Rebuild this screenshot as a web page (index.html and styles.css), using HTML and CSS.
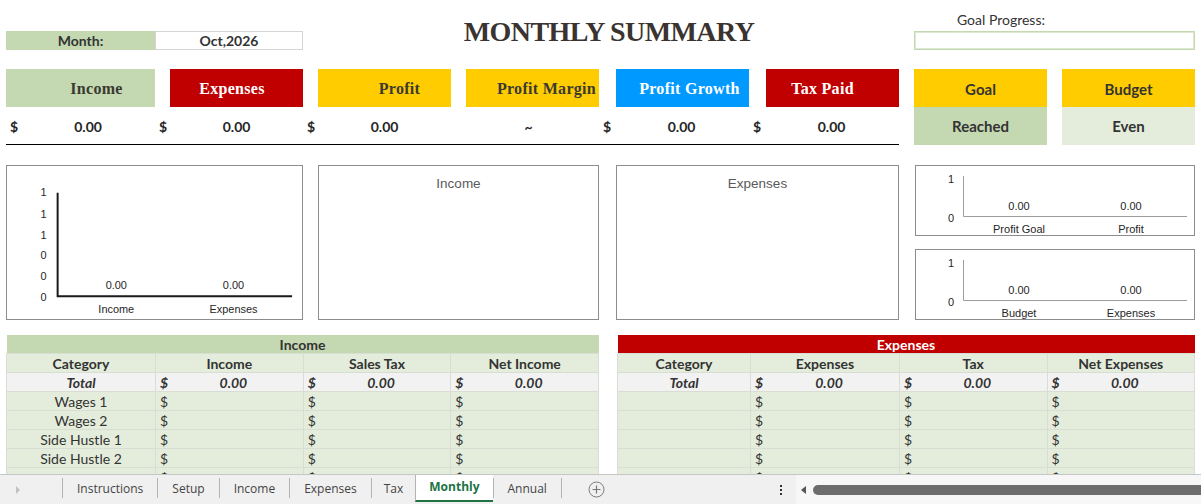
FILE: index.html
```html
<!DOCTYPE html>
<html lang="en">
<head>
    <meta charset="UTF-8">
    <meta name="viewport" content="width=device-width, initial-scale=1.0">
    <title>Monthly Summary</title>
    <link rel="stylesheet" href="styles.css">
</head>
<body>
    <div class="sheet">
        <!-- header: month picker, title, goal progress -->
        <section class="grid top">
            <div class="month-label">Month:</div>
            <div class="month-value">Oct,2026</div>
            <h1 class="title">MONTHLY SUMMARY</h1>
            <div class="goal-label">Goal Progress:</div>
            <div class="goal-bar"></div>
        </section>

        <!-- key figures -->
        <section class="grid kpis">
            <div class="kpi-head k-income">Income</div>
            <div class="kpi-head k-expenses">Expenses</div>
            <div class="kpi-head k-profit">Profit</div>
            <div class="kpi-head k-margin">Profit Margin</div>
            <div class="kpi-head k-growth">Profit Growth</div>
            <div class="kpi-head k-tax">Tax Paid</div>
            <div class="kpi-head k-goal">Goal</div>
            <div class="kpi-head k-budget">Budget</div>

            <div class="kpi-val"><span class="cur">$</span><span class="num">0.00</span></div>
            <div class="kpi-val"><span class="cur">$</span><span class="num">0.00</span></div>
            <div class="kpi-val"><span class="cur">$</span><span class="num">0.00</span></div>
            <div class="kpi-val"><span class="num">~</span></div>
            <div class="kpi-val"><span class="cur">$</span><span class="num">0.00</span></div>
            <div class="kpi-val"><span class="cur">$</span><span class="num">0.00</span></div>
            <div class="status reached">Reached</div>
            <div class="status even">Even</div>
        </section>

        <!-- charts -->
        <section class="grid charts">
            <div class="chart chart-main">
                <svg viewBox="0 0 295 154">
                    <g class="tick">
                        <text x="39" y="30">1</text>
                        <text x="39" y="52">1</text>
                        <text x="39" y="73">1</text>
                        <text x="39" y="94">0</text>
                        <text x="39" y="115">0</text>
                        <text x="39" y="136">0</text>
                    </g>
                    <path class="axis-dark" d="M50 27 V131 H286"/>
                    <g class="lbl">
                        <text x="109" y="124">0.00</text>
                        <text x="227" y="124">0.00</text>
                        <text x="109" y="148">Income</text>
                        <text x="227" y="148">Expenses</text>
                    </g>
                </svg>
            </div>
            <div class="chart chart-pie">
                <div class="chart-title">Income</div>
            </div>
            <div class="chart chart-pie2">
                <div class="chart-title">Expenses</div>
            </div>
            <div class="chart chart-small">
                <svg viewBox="0 0 278 69">
                    <g class="lbl">
                        <text x="35" y="17">1</text>
                        <text x="35" y="56">0</text>
                        <text x="103" y="44">0.00</text>
                        <text x="215" y="44">0.00</text>
                        <text x="103" y="67">Profit Goal</text>
                        <text x="215" y="67">Profit</text>
                    </g>
                    <path class="axis" d="M47.5 10 V50.5 H271"/>
                </svg>
            </div>
            <div class="chart chart-small second">
                <svg viewBox="0 0 278 69">
                    <g class="lbl">
                        <text x="35" y="17">1</text>
                        <text x="35" y="56">0</text>
                        <text x="103" y="44">0.00</text>
                        <text x="215" y="44">0.00</text>
                        <text x="103" y="67">Budget</text>
                        <text x="215" y="67">Expenses</text>
                    </g>
                    <path class="axis" d="M47.5 10 V50.5 H271"/>
                </svg>
            </div>
        </section>

        <!-- detail tables -->
        <section class="grid tables">
            <table class="ledger ledger-income">
                <colgroup><col style="width:149px"><col><col><col></colgroup>
                <thead>
                    <tr><th colspan="4" class="ledger-title">Income</th></tr>
                    <tr class="heads"><th>Category</th><th>Income</th><th>Sales Tax</th><th>Net Income</th></tr>
                </thead>
                <tbody>
                    <tr class="total"><td>Total</td><td class="money"><span class="cur">$</span>0.00</td><td class="money"><span class="cur">$</span>0.00</td><td class="money"><span class="cur">$</span>0.00</td></tr>
                    <tr><td>Wages 1</td><td class="money"><span class="cur">$</span></td><td class="money"><span class="cur">$</span></td><td class="money"><span class="cur">$</span></td></tr>
                    <tr><td>Wages 2</td><td class="money"><span class="cur">$</span></td><td class="money"><span class="cur">$</span></td><td class="money"><span class="cur">$</span></td></tr>
                    <tr><td>Side Hustle 1</td><td class="money"><span class="cur">$</span></td><td class="money"><span class="cur">$</span></td><td class="money"><span class="cur">$</span></td></tr>
                    <tr><td>Side Hustle 2</td><td class="money"><span class="cur">$</span></td><td class="money"><span class="cur">$</span></td><td class="money"><span class="cur">$</span></td></tr>
                    <tr><td></td><td class="money"><span class="cur">$</span></td><td class="money"><span class="cur">$</span></td><td class="money"><span class="cur">$</span></td></tr>
                </tbody>
            </table>
            <table class="ledger ledger-expenses">
                <colgroup><col style="width:133px"><col style="width:149px"><col><col></colgroup>
                <thead>
                    <tr><th colspan="4" class="ledger-title">Expenses</th></tr>
                    <tr class="heads"><th>Category</th><th>Expenses</th><th>Tax</th><th>Net Expenses</th></tr>
                </thead>
                <tbody>
                    <tr class="total"><td>Total</td><td class="money"><span class="cur">$</span>0.00</td><td class="money"><span class="cur">$</span>0.00</td><td class="money"><span class="cur">$</span>0.00</td></tr>
                    <tr><td></td><td class="money"><span class="cur">$</span></td><td class="money"><span class="cur">$</span></td><td class="money"><span class="cur">$</span></td></tr>
                    <tr><td></td><td class="money"><span class="cur">$</span></td><td class="money"><span class="cur">$</span></td><td class="money"><span class="cur">$</span></td></tr>
                    <tr><td></td><td class="money"><span class="cur">$</span></td><td class="money"><span class="cur">$</span></td><td class="money"><span class="cur">$</span></td></tr>
                    <tr><td></td><td class="money"><span class="cur">$</span></td><td class="money"><span class="cur">$</span></td><td class="money"><span class="cur">$</span></td></tr>
                    <tr><td></td><td class="money"><span class="cur">$</span></td><td class="money"><span class="cur">$</span></td><td class="money"><span class="cur">$</span></td></tr>
                </tbody>
            </table>
        </section>
    </div>

    <!-- workbook sheet tabs -->
    <footer class="tabbar">
        <div class="tab-nav"><span class="tri-right"></span></div>
        <ul class="tabs">
            <li>Instructions</li>
            <li>Setup</li>
            <li>Income</li>
            <li>Expenses</li>
            <li class="narrow">Tax</li>
            <li class="active">Monthly</li>
            <li>Annual</li>
        </ul>
        <div class="add-sheet">
            <svg width="17" height="17" viewBox="0 0 17 17">
                <circle cx="8.5" cy="8.5" r="7.5" fill="none" stroke="#7a7a7a" stroke-width="1"/>
                <path d="M8.5 4.5 V12.5 M4.5 8.5 H12.5" stroke="#7a7a7a" stroke-width="1.2"/>
            </svg>
        </div>
        <div class="spacer"></div>
        <div class="dots"><i></i><i></i><i></i></div>
        <div class="hscroll">
            <span class="tri-left"></span>
            <div class="thumb"></div>
        </div>
    </footer>
</body>
</html>
```

FILE: styles.css
```css
html, body {
    height: 100%;
}
body {
    margin: 0;
    display: flex;
    flex-direction: column;
    font-family: Lato, "Open Sans", sans-serif;
    color: #333;
    background: #fff;
    overflow: hidden;
}
.sheet {
    flex: 1;
    overflow: hidden;
    padding: 0 6px;
}
.grid {
    display: grid;
    grid-template-columns: 149px 148px 148px 148px 150px 150px 148px 148px;
}

/* header */
.top {
    grid-template-rows: 31px 19px;
}
.month-label {
    grid-column: 1;
    grid-row: 2;
    background: #c4d8b2;
    font-weight: bold;
    font-size: 14px;
    line-height: 19px;
    text-align: center;
}
.month-value {
    grid-column: 2;
    grid-row: 2;
    border: 1px solid #d4d4d4;
    font-weight: bold;
    font-size: 14px;
    line-height: 17px;
    text-align: center;
}
.title {
    grid-column: 3 / 7;
    grid-row: 1 / 3;
    margin: 18px 0 0;
    padding-left: 16px;
    font-family: "Liberation Serif", serif;
    font-size: 28px;
    line-height: 28px;
    letter-spacing: -0.6px;
    text-align: center;
    color: #3a3330;
}
.goal-label {
    grid-column: 7;
    grid-row: 1;
    align-self: end;
    text-align: right;
    padding: 0 2px 3px 0;
    font-size: 14px;
    color: #333;
}
.goal-bar {
    grid-column: 7 / 9;
    grid-row: 2;
    margin-left: 15px;
    border: 1px solid #c4d8b2;
    box-shadow: inset 0 0 0 1px #dde8d3;
}

/* key figures */
.kpis {
    margin-top: 19px;
    grid-template-rows: 38px 38px;
}
.kpi-head {
    margin-left: 15px;
    padding-top: 2px;
    display: flex;
    align-items: center;
    justify-content: center;
    font-family: "Liberation Serif", serif;
    font-weight: bold;
    font-size: 16px;
    letter-spacing: 0.3px;
    white-space: nowrap;
}
.k-income { margin-left: 0; background: #c4d8b2; color: #3a3a30; padding-left: 32px; }
.k-expenses { background: #c00000; color: #fff; padding-right: 9px; }
.k-profit { background: #ffcc00; color: #3a3a30; padding-left: 30px; }
.k-margin { background: #ffcc00; color: #3a3a30; padding-left: 28px; }
.k-growth { margin-left: 17px; background: #0099ff; color: #fff; padding-left: 14px; }
.k-tax { margin-left: 17px; background: #c00000; color: #fff; padding-right: 20px; }
.k-goal, .k-budget {
    background: #ffcc00;
    font-family: Lato, sans-serif;
    letter-spacing: 0;
    font-size: 15px;
    color: #333;
}
.kpi-val {
    display: flex;
    align-items: center;
    padding: 2px 0 0 4px;
    border-bottom: 1px solid #000;
    font-weight: bold;
    font-size: 14px;
    color: #262626;
}
.kpi-val .num {
    flex: 1;
    text-align: center;
    padding-left: 3px;
}
.status {
    margin-left: 15px;
    display: flex;
    align-items: center;
    justify-content: center;
    font-weight: bold;
    font-size: 15px;
    color: #333;
}
.reached { background: #c4d8b2; }
.even { background: #e4eddc; }

/* charts */
.charts {
    margin-top: 20px;
    grid-template-rows: 71px 71px;
    row-gap: 13px;
}
.chart {
    border: 1px solid #8c8c8c;
    background: #fff;
    font-family: "Liberation Sans", Arial, sans-serif;
}
.chart svg {
    display: block;
    width: 100%;
    height: 100%;
}
.chart-main { grid-column: 1 / 3; grid-row: 1 / 3; }
.chart-pie { grid-column: 3 / 5; grid-row: 1 / 3; margin-left: 15px; }
.chart-pie2 { grid-column: 5 / 7; grid-row: 1 / 3; margin-left: 17px; }
.chart-small { grid-column: 7 / 9; grid-row: 1; margin-left: 16px; }
.chart-small.second { grid-row: 2; }
.chart-title {
    margin-top: 10px;
    text-align: center;
    font-size: 13.5px;
    color: #595959;
}
.tick text {
    font-size: 11px;
    text-anchor: end;
    fill: #262626;
}
.lbl text {
    font-size: 11px;
    text-anchor: middle;
    fill: #262626;
}
.axis-dark {
    fill: none;
    stroke: #1a1a1a;
    stroke-width: 2;
}
.axis {
    fill: none;
    stroke: #9c9c9c;
    stroke-width: 1;
}

/* tables */
.tables {
    margin-top: 15px;
    align-items: start;
}
.ledger {
    border-collapse: collapse;
    table-layout: fixed;
    width: 100%;
    font-size: 14px;
    color: #333;
}
.ledger-income { grid-column: 1 / 5; }
.ledger-expenses { grid-column: 5 / 9; margin-left: 18px; width: calc(100% - 18px); }
.ledger th, .ledger td {
    height: 18px;
    padding: 0 4px;
    line-height: 17px;
    border: 1px solid #d9ded4;
    background: #e4eddc;
    text-align: center;
    white-space: nowrap;
    overflow: hidden;
}
.ledger .ledger-title {
    height: 18px;
    border: none;
    background: #c4d8b2;
}
.ledger-expenses .ledger-title {
    background: #c00000;
    color: #fff;
}
.ledger .heads th {
    font-weight: bold;
}
.ledger .total td {
    background: #f2f2f2;
    font-weight: bold;
    font-style: italic;
}
.money .cur {
    float: left;
}

/* sheet tabs */
.tabbar {
    flex: 0 0 30px;
    display: flex;
    align-items: stretch;
    background: #f0f0f0;
    border-top: 1px solid #c6c6c6;
    font-family: "Open Sans", sans-serif;
    font-size: 12px;
    color: #444;
    box-sizing: border-box;
}
.tab-nav {
    width: 62px;
    display: flex;
    align-items: center;
    padding-left: 16px;
    box-sizing: border-box;
}
.tri-right {
    width: 0;
    height: 0;
    border-top: 4px solid transparent;
    border-bottom: 4px solid transparent;
    border-left: 4px solid #c2c2c2;
}
.tabs {
    display: flex;
    margin: 3px 0 6px;
    padding: 0;
    list-style: none;
    border-right: 1px solid #b4b4b4;
}
.tabs li {
    display: flex;
    align-items: center;
    padding: 0 14px;
    border-left: 1px solid #b4b4b4;
}
.tabs li.narrow {
    padding: 0 12px;
}
.tabs li.active {
    background: #fff;
    margin-top: -3px;
    margin-bottom: -4px;
    padding: 0 13px 2px;
    border-bottom: 2px solid #217346;
    color: #217346;
    font-weight: bold;
}
.add-sheet {
    display: flex;
    align-items: center;
    margin-left: 26px;
}
.spacer {
    flex: 1;
}
.dots {
    display: flex;
    flex-direction: column;
    justify-content: center;
    gap: 2px;
    margin-right: 14px;
}
.dots i {
    display: block;
    width: 2px;
    height: 2px;
    background: #333;
}
.hscroll {
    width: 405px;
    display: flex;
    align-items: center;
    padding-left: 5px;
    background: #f7f7f7;
    box-sizing: border-box;
}
.tri-left {
    width: 0;
    height: 0;
    border-top: 4px solid transparent;
    border-bottom: 4px solid transparent;
    border-right: 5px solid #555;
    margin-right: 7px;
}
.thumb {
    flex: 1;
    height: 10px;
    border-radius: 5px 0 0 5px;
    background: #6d6d6d;
}
```
